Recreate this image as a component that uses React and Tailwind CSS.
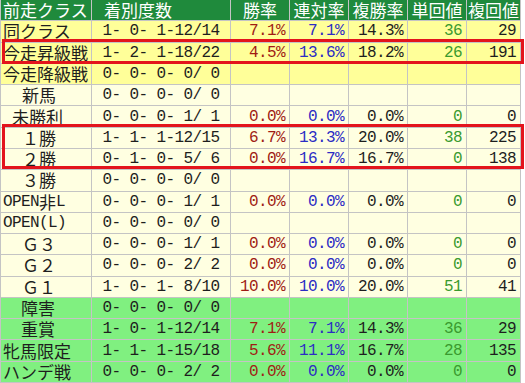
import { Fragment } from "react";

const rows = [
  { label: "同クラス", pad: "pl-[2px]", rec: "1- 0- 1-12/14", v: ["7.1%", "7.1%", "14.3%", "36", "29"], bg: "bg-[#ffff99]" },
  { label: "今走昇級戦", pad: "pl-[2px]", rec: "1- 2- 1-18/22", v: ["4.5%", "13.6%", "18.2%", "26", "191"], bg: "bg-[#ffff99]" },
  { label: "今走降級戦", pad: "pl-[2px]", rec: "0- 0- 0- 0/ 0", v: null, bg: "bg-[#ffff99]" },
  { label: "新馬", pad: "pl-[21px]", rec: "0- 0- 0- 0/ 0", v: null, bg: "bg-[#ffffe1]" },
  { label: "未勝利", pad: "pl-[11px]", rec: "0- 0- 0- 1/ 1", v: ["0.0%", "0.0%", "0.0%", "0", "0"], bg: "bg-[#ffffe1]" },
  { label: "１勝", pad: "pl-[21px]", rec: "1- 1- 1-12/15", v: ["6.7%", "13.3%", "20.0%", "38", "225"], bg: "bg-[#ffffe1]" },
  { label: "２勝", pad: "pl-[21px]", rec: "0- 1- 0- 5/ 6", v: ["0.0%", "16.7%", "16.7%", "0", "138"], bg: "bg-[#ffffe1]" },
  { label: "３勝", pad: "pl-[21px]", rec: "0- 0- 0- 0/ 0", v: null, bg: "bg-[#ffffe1]" },
  { label: "OPEN非L", pad: "pl-[2px]", rec: "0- 0- 0- 1/ 1", v: ["0.0%", "0.0%", "0.0%", "0", "0"], bg: "bg-[#ffffe1]" },
  { label: "OPEN(L)", pad: "pl-[2px]", rec: "0- 0- 0- 0/ 0", v: null, bg: "bg-[#ffffe1]" },
  { label: "Ｇ３", pad: "pl-[21px]", rec: "0- 0- 0- 1/ 1", v: ["0.0%", "0.0%", "0.0%", "0", "0"], bg: "bg-[#ffffe1]" },
  { label: "Ｇ２", pad: "pl-[21px]", rec: "0- 0- 0- 2/ 2", v: ["0.0%", "0.0%", "0.0%", "0", "0"], bg: "bg-[#ffffe1]" },
  { label: "Ｇ１", pad: "pl-[21px]", rec: "1- 0- 1- 8/10", v: ["10.0%", "10.0%", "20.0%", "51", "41"], bg: "bg-[#ffffe1]" },
  { label: "障害", pad: "pl-[20px]", rec: "0- 0- 0- 0/ 0", v: null, bg: "bg-[#80f080]" },
  { label: "重賞", pad: "pl-[20px]", rec: "1- 0- 1-12/14", v: ["7.1%", "7.1%", "14.3%", "36", "29"], bg: "bg-[#80f080]" },
  { label: "牝馬限定", pad: "pl-[2px]", rec: "1- 1- 1-15/18", v: ["5.6%", "11.1%", "16.7%", "28", "135"], bg: "bg-[#80f080]" },
  { label: "ハンデ戦", pad: "pl-[2px]", rec: "0- 0- 0- 2/ 2", v: ["0.0%", "0.0%", "0.0%", "0", "0"], bg: "bg-[#80f080]" },
];

const heads = ["勝率", "連対率", "複勝率", "単回値", "複回値"];
const valColors = ["text-[#a01c14]", "text-[#2c2cc4]", "text-[#1e1e1e]", "text-[#3a9a2e]", "text-[#1e1e1e]"];

const jp = "font-['Noto_Sans_CJK_JP',sans-serif] text-[17px]";
const mono = "font-['Liberation_Mono','Noto_Sans_CJK_JP',monospace] text-[16px] tracking-[-0.6px]";
const cell = "border-r border-b border-[#c4c4c4] flex items-center leading-[20px]";

// ascii runs in mono, the rest in the japanese font
function Label({ text }) {
  const parts = text.match(/[\x00-\x7f]+|[^\x00-\x7f]+/g);
  return parts.map((p, i) =>
    /^[\x00-\x7f]/.test(p) ? <span key={i} className={mono}>{p}</span> : <span key={i} className={jp}>{p}</span>
  );
}

export default function App() {
  return (
    <div className="relative w-[525px] h-[383px] bg-white overflow-hidden">
      <div className="grid grid-cols-[91px_139px_59px_59px_59px_59px_54px] grid-rows-18 h-[383px] w-[521px] border-l border-[#c4c4c4]">
        <div className={`${cell} bg-[#1f8a3c] text-white pl-[2px] ${jp}`}>前走クラス</div>
        <div className={`${cell} bg-[#1f8a3c] text-white pl-[12px] ${jp}`}>着別度数</div>
        {heads.map(h => (
          <div key={h} className={`${cell} bg-[#1f8a3c] text-white justify-center ${jp}`}>{h}</div>
        ))}

        {rows.map(r => (
          <Fragment key={r.label}>
            <div className={`${cell} ${r.bg} ${r.pad} text-[#1e1e1e] whitespace-pre`}>
              <Label text={r.label} />
            </div>
            <div className={`${cell} ${r.bg} justify-center text-[#1e1e1e] whitespace-pre ${mono}`}>{r.rec}</div>
            {heads.map((h, i) => (
              <div key={h} className={`${cell} ${r.bg} justify-end pr-[4px] ${mono} ${valColors[i]}`}>
                {r.v ? r.v[i] : ""}
              </div>
            ))}
          </Fragment>
        ))}
      </div>

      <div className="absolute left-[2px] top-[39px] w-[522px] h-[25px] border-[3px] border-[#e3141c]" />
      <div className="absolute left-[2px] top-[124px] w-[522px] h-[45px] border-[3px] border-[#e3141c]" />
    </div>
  );
}
